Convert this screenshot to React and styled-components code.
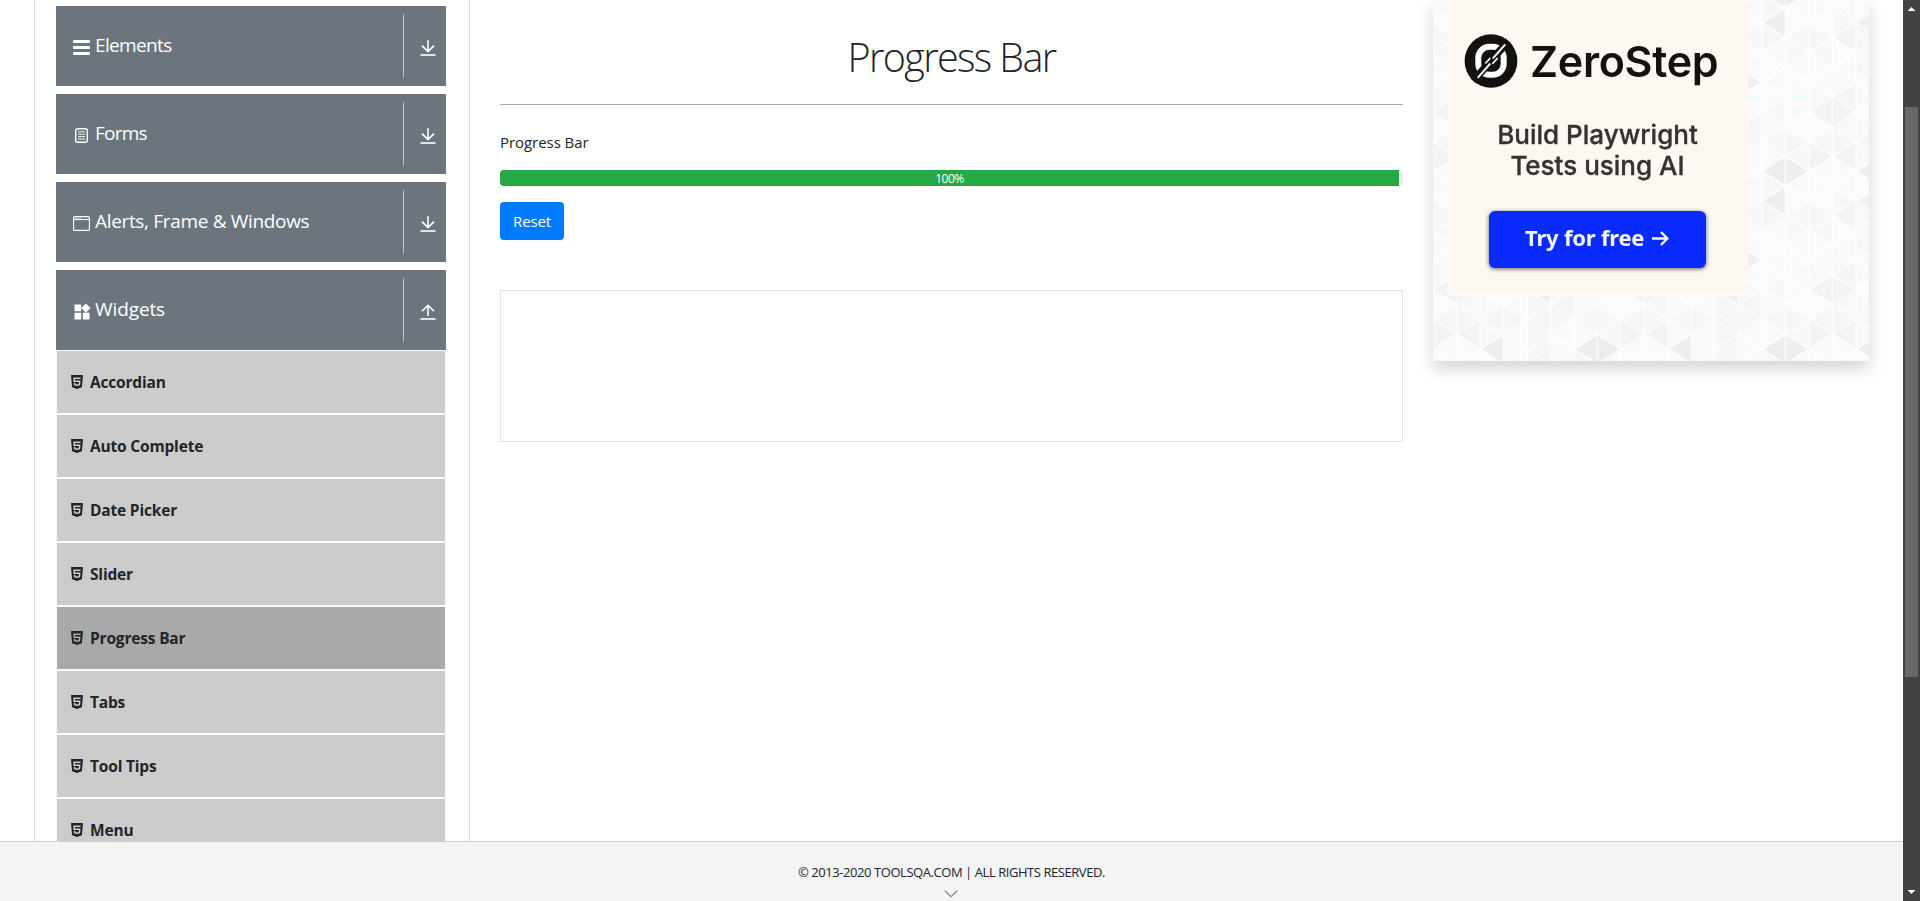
import React from "react";
import styled, { createGlobalStyle } from "styled-components";
import { FaHtml5 } from "react-icons/fa";
import { MdWidgets } from "react-icons/md";

const GlobalStyle = createGlobalStyle`
  *, *::before, *::after { box-sizing: border-box; }
  body {
    margin: 0;
    background: #fff;
    color: #212529;
    font-family: "Segoe UI", "Open Sans", "Noto Sans", sans-serif;
    font-size: 16px;
    line-height: 1.5;
    overflow: hidden;
  }
`;

const Window = styled.div`
  display: flex;
  width: 1920px;
  height: 901px;
  overflow: hidden;
`;

const Page = styled.div`
  display: flex;
  flex-direction: column;
  width: 1903px;
`;

const Body = styled.div`
  display: flex;
  align-items: flex-start;
  height: 841px;
  padding-left: 34px;
  overflow: hidden;
`;

const Sidebar = styled.nav`
  width: 436px;
  height: 841px;
  padding: 6px 23px 0 21px;
  border-left: 1px solid #dcdcdc;
  border-right: 1px solid #dcdcdc;
  flex: none;
`;

const GroupHeader = styled.div`
  display: flex;
  align-items: center;
  height: 80px;
  margin-bottom: ${(p) => (p.$open ? 0 : 8)}px;
  padding-left: 17px;
  background: #6c757d;
  color: #fff;
`;

const GroupIcon = styled.span`
  display: flex;
  align-items: center;
  justify-content: center;
  width: 18px;
  height: 18px;
  margin: 3px 4px 0 0;
  svg {
    display: block;
    flex: none;
    width: ${(p) => p.$size}px;
    height: ${(p) => p.$size}px;
  }
`;

const GroupTitle = styled.span`
  flex: 1;
  padding-bottom: 1px;
  font-size: 19px;
  letter-spacing: ${(p) => p.$spacing}px;
  white-space: nowrap;
`;

const Toggle = styled.span`
  display: flex;
  align-items: center;
  width: 43px;
  height: 64px;
  padding: 4px 0 0 16px;
  border-left: 1px solid #c0c4c8;
`;

const SubItem = styled.div`
  display: flex;
  align-items: center;
  height: 64px;
  padding: 0 0 0 14px;
  border: 1px solid #fafafa;
  background: ${(p) => (p.$active ? "#a9a9a9" : "#ccc")};
  font-size: 15.5px;
  font-weight: 700;
  svg { width: 12px; height: 16px; margin: 0 7px 1px 0; }
`;

const SubLabel = styled.span`
  padding-top: 1px;
  letter-spacing: -0.18px;
`;

const Main = styled.main`
  width: 903px;
  margin-left: 30px;
  flex: none;
`;

const Title = styled.h1`
  height: 105px;
  margin: 0;
  padding-top: 27px;
  border-bottom: 1px solid #aaa;
  text-align: center;
  font-size: 39.5px;
  line-height: 60px;
  font-weight: 300;
  letter-spacing: -1.6px;
`;

const Label = styled.div`
  margin-top: 25px;
  height: 40px;
  line-height: 24px;
  font-size: 15px;
  letter-spacing: -0.05px;
`;

const Track = styled.div`
  height: 16px;
  border-radius: 4px;
  background: #e9ecef;
  overflow: hidden;
`;

const Fill = styled.div`
  width: 899px;
  height: 16px;
  background: #28a745;
  color: #fff;
  text-align: center;
  font-size: 12px;
  line-height: 17px;
  letter-spacing: -0.45px;
`;

const Button = styled.button`
  display: block;
  width: 64px;
  height: 38px;
  margin-top: 16px;
  padding: 0 0 1px;
  border: 0;
  border-radius: 4px;
  background: #007bff;
  color: #fff;
  font: 15px "Segoe UI", "Open Sans", "Noto Sans", sans-serif;
  letter-spacing: -0.15px;
`;

const EmptyAd = styled.div`
  height: 152px;
  margin-top: 50px;
  border: 1px solid #e2e2e2;
`;

const AdPanel = styled.aside`
  position: relative;
  width: 436px;
  height: 361px;
  margin-left: 30px;
  padding-left: 15px;
  box-shadow: 0 8px 16px rgba(0, 0, 0, 0.17);
  flex: none;
`;

const Backdrop = styled.svg`
  position: absolute;
  inset: 0;
  width: 436px;
  height: 361px;
`;

const Creative = styled.div`
  position: relative;
  display: flex;
  flex-direction: column;
  width: 300px;
  height: 296px;
  padding: 34px 0 0 16px;
  background: #fdf8f1;
  font-family: Inter, sans-serif;
`;

const Brand = styled.div`
  display: flex;
  align-items: center;
  height: 54px;
  color: #131211;
  font-size: 43px;
  font-weight: 600;
  letter-spacing: -0.3px;
  filter: blur(0.4px);
  svg { margin-right: 12px; flex: none; }
`;

const Tagline = styled.div`
  margin-top: 31px;
  width: 267px;
  text-align: center;
  color: #35322f;
  font-size: 26px;
  line-height: 31px;
  font-weight: 500;
  -webkit-text-stroke: 0.35px #35322f;
  filter: blur(0.4px);
`;

const CallToAction = styled.div`
  display: flex;
  align-items: center;
  width: 217px;
  height: 57px;
  margin: 30px 0 0 25px;
  padding: 0 0 4px 36px;
  border-radius: 6px;
  background: #0a2bff;
  box-shadow: 0 1px 4px rgba(10, 10, 60, 0.65);
  color: #f3f5ff;
  font-family: "Noto Sans", sans-serif;
  font-size: 22px;
  font-weight: 700;
  letter-spacing: -0.2px;
  span { width: 126px; filter: blur(0.4px); white-space: nowrap; }
`;

const Footer = styled.footer`
  display: flex;
  flex-direction: column;
  align-items: center;
  height: 60px;
  padding: 20px 0 0;
  border-top: 1px solid #ccc;
  background: #f4f4f4;
  font-size: 13px;
  line-height: 20px;
  letter-spacing: -0.44px;
  svg { margin: 8px 2px 0 0; }
`;

const Scrollbar = styled.div`
  display: flex;
  flex-direction: column;
  align-items: center;
  width: 17px;
  height: 901px;
  padding: 7px 0;
  background: #424242;
  svg { display: block; }
`;

const Thumb = styled.div`
  width: 13px;
  height: 570px;
  margin: 96px 0 auto;
  background: #686868;
`;

const MenuIcon = () => (
  <svg viewBox="0 0 18 18" fill="currentColor">
    <rect x="0" y="1" width="17" height="3" rx="1" />
    <rect x="0" y="7" width="17" height="3" rx="1" />
    <rect x="0" y="13" width="17" height="3" rx="1" />
  </svg>
);

const FormIcon = () => (
  <svg viewBox="0 0 18 18" fill="none" stroke="currentColor">
    <rect x="2.7" y="1.7" width="11.6" height="13.6" rx="2" strokeWidth="1.4" />
    <path d="M5 4.8h7M5 7.2h7M5 9.6h7M5 12h7" strokeWidth="0.9" />
  </svg>
);

const FrameIcon = () => (
  <svg viewBox="0 0 18 18" fill="none" stroke="currentColor">
    <rect x="0.6" y="1.6" width="15.8" height="13.8" rx="1" strokeWidth="1.1" />
    <path d="M0.6 4.6h15.8" />
    <path d="M2 3.1h1.2M4.3 3.1h1.2M6.6 3.1h1.2" strokeWidth="1.2" />
  </svg>
);

const ArrowIcon = ({ up }) => (
  <svg width="16" height="18" viewBox="0 0 16 18" fill="none" stroke="#fff">
    <path
      d={up ? "M8 13V3M2 8.3l6-6 6 6" : "M8 1.3v11M2 6.6l6 6 6-6"}
      strokeWidth="1.6"
    />
    <path d="M0.5 16h15" strokeWidth="1.8" strokeOpacity="0.88" />
  </svg>
);

const BrandMark = () => (
  <svg width="54" height="54" viewBox="0 0 54 54">
    <ellipse cx="27" cy="27" rx="26.4" ry="26.8" fill="#131211" />
    <rect x="14.3" y="12.8" width="25.4" height="28" rx="11" fill="none" stroke="#fff" strokeWidth="6" />
    <path d="M9.3 47L44.3 7" stroke="#131211" strokeWidth="7.5" />
    <path d="M13.7 43.8L26.3 29.5M28.8 24.5L41.3 10.4" stroke="#f4f2ef" strokeWidth="2" />
    <path d="M21.3 29.5l5-5.5M28.3 30l5.4-6" stroke="#f4f2ef" strokeWidth="1.8" />
  </svg>
);

const COL = 23.5;
const ROW = 178 / 12;

// Darker facets of the repeating tile, keyed by "column-row".
const FACETS = {
  "2-11": "#eeeeee", "6-11": "#ededed", "7-11": "#ededed",
  "0-10": "#f3f3f3", "1-10": "#f3f3f3", "4-7": "#efefef",
  "5-5": "#efefef", "6-1": "#eeeeee", "2-1": "#f0f0f0",
  "1-2": "#f3f3f3", "0-7": "#f3f3f3", "1-7": "#f3f3f3",
  "1-6": "#f5f5f5", "7-2": "#f8f8f8", "5-8": "#f6f6f6",
};
const LIGHTS = ["#fafafa", "#fafafa", "#f8f8f8", "#fbfbfb", "#f9f9f9", "#fafafa", "#f7f7f7"];

const triangles = [];
for (let c = 0; c < 8; c += 1) {
  for (let r = -1; r <= 12; r += 1) {
    const row = (r + 12) % 12;
    const y = 8.1 + ROW * r;
    const apexLeft = (row + c) % 2 === 1;
    const apex = apexLeft ? c * COL : (c + 1) * COL;
    const base = apexLeft ? (c + 1) * COL : c * COL;
    triangles.push({
      key: `${c}-${r}`,
      points: `${apex},${y} ${base},${y - ROW} ${base},${y + ROW}`,
      fill: FACETS[`${c}-${row}`] || LIGHTS[(c * 5 + row * 3 + c * row) % 7],
    });
  }
}

const TriangleBackdrop = () => (
  <Backdrop>
    <defs>
      <pattern id="facets" width="188" height="178" patternUnits="userSpaceOnUse">
        {triangles.map((t) => (
          <polygon key={t.key} points={t.points} fill={t.fill} stroke="#fefefe" strokeWidth="1.3" />
        ))}
        <path d="M127 97h12M168 97h18" stroke="#ebfcfc" strokeWidth="2" />
      </pattern>
    </defs>
    <rect width="436" height="361" fill="url(#facets)" />
  </Backdrop>
);

const GROUPS = [
  { title: "Elements", icon: <MenuIcon />, size: 18, spacing: -0.65 },
  { title: "Forms", icon: <FormIcon />, size: 18, spacing: -0.75 },
  { title: "Alerts, Frame & Windows", icon: <FrameIcon />, size: 18, spacing: -0.33 },
  { title: "Widgets", icon: <MdWidgets />, size: 20, spacing: -0.1, open: true },
];

const ITEMS = [
  "Accordian", "Auto Complete", "Date Picker", "Slider",
  "Progress Bar", "Tabs", "Tool Tips", "Menu",
];

export default function App() {
  return (
    <Window>
      <GlobalStyle />
      <Page>
        <Body>
          <Sidebar>
            {GROUPS.map((g) => (
              <GroupHeader key={g.title} $open={g.open}>
                <GroupIcon $size={g.size}>{g.icon}</GroupIcon>
                <GroupTitle $spacing={g.spacing}>{g.title}</GroupTitle>
                <Toggle><ArrowIcon up={g.open} /></Toggle>
              </GroupHeader>
            ))}
            {ITEMS.map((name) => (
              <SubItem key={name} $active={name === "Progress Bar"}>
                <FaHtml5 />
                <SubLabel>{name}</SubLabel>
              </SubItem>
            ))}
          </Sidebar>
          <Main>
            <Title>Progress Bar</Title>
            <Label>Progress Bar</Label>
            <Track><Fill>100%</Fill></Track>
            <Button>Reset</Button>
            <EmptyAd />
          </Main>
          <AdPanel>
            <TriangleBackdrop />
            <Creative>
              <Brand><BrandMark />ZeroStep</Brand>
              <Tagline>Build Playwright<br />Tests using AI</Tagline>
              <CallToAction>
                <span>Try for free</span>
                <svg width="18" height="18" viewBox="0 0 18 18" fill="none" stroke="#f3f5ff" strokeWidth="2.4">
                  <path d="M1 9.5h15M10 3l6.3 6.5L10 16" />
                </svg>
              </CallToAction>
            </Creative>
          </AdPanel>
        </Body>
        <Footer>
          <span>© 2013-2020 TOOLSQA.COM | ALL RIGHTS RESERVED.</span>
          <svg width="14" height="8" viewBox="0 0 14 8" fill="none" stroke="#888" strokeWidth="1.3">
            <path d="M0.8 0.8L7 6.6l6.2-5.8" />
          </svg>
        </Footer>
      </Page>
      <Scrollbar>
        <svg width="7" height="4" viewBox="0 0 7 4" fill="#fff"><path d="M3.5 0L7 3.5V4H0V3.5z" /></svg>
        <Thumb />
        <svg width="7" height="4" viewBox="0 0 7 4" fill="#fff"><path d="M3.5 4L7 0.5V0H0v0.5z" /></svg>
      </Scrollbar>
    </Window>
  );
}
